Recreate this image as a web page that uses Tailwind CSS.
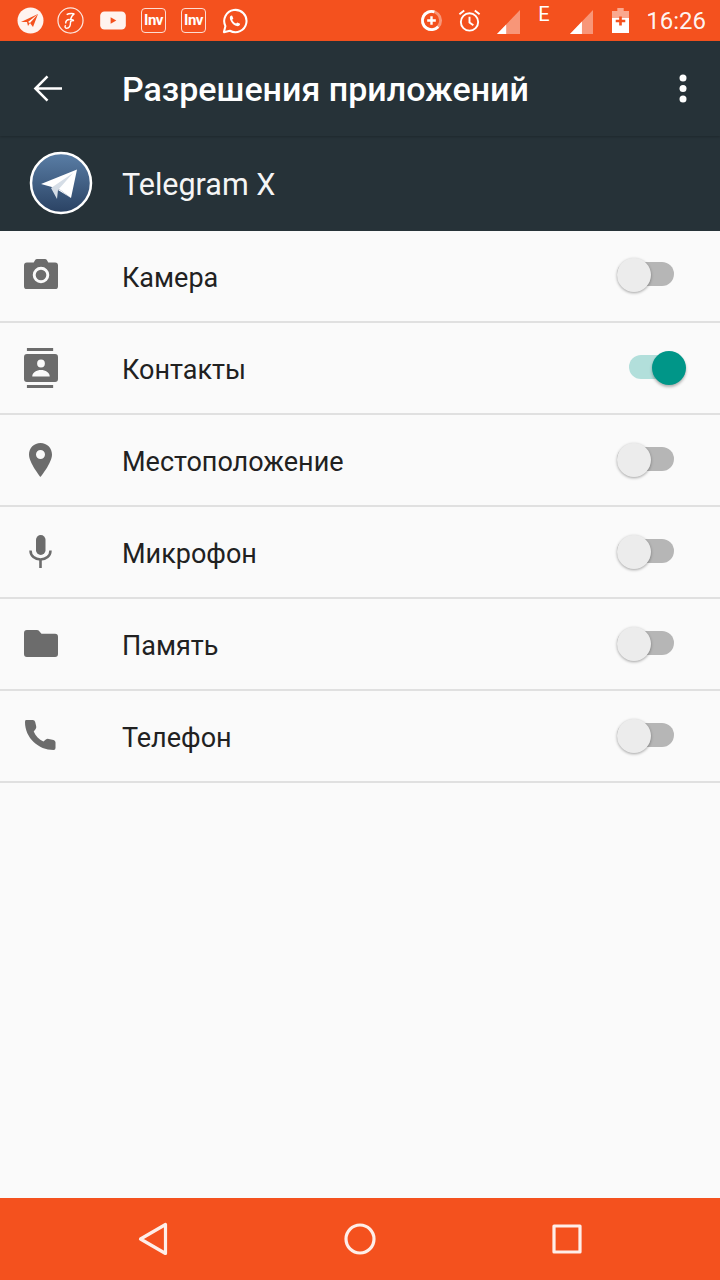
<!DOCTYPE html>
<html lang="ru">
<head>
    <meta charset="UTF-8">
    <meta name="viewport" content="width=device-width, initial-scale=1.0">
    <title>Разрешения приложений</title>
    <script src="https://cdn.jsdelivr.net/npm/@tailwindcss/browser@4"></script>
</head>
<body class="bg-[#fafafa] font-['Roboto',sans-serif]">
<div class="flex flex-col h-[1280px] w-[720px] overflow-hidden">

    <!-- Status bar -->
    <div class="h-[41px] bg-[#f4511e] flex items-center justify-between text-white shrink-0">
        <div class="flex items-center">
            <svg class="ml-[17px] w-[27px] h-[27px]" viewBox="0 0 27 27"><circle cx="13.5" cy="13.5" r="13" fill="#fff" fill-opacity=".93"/><path d="M4 15l17-8-5 13-3-4-2 3-1-4z" fill="#f4511e"/><path d="M13 16l8-9-10 8z" fill="#fff"/></svg>
            <svg class="ml-[13px] w-[27px] h-[27px]" viewBox="0 0 28 28" fill="none" stroke="#fff"><circle cx="14" cy="14" r="13" stroke-width="1.3" stroke-opacity=".85"/><path d="M10 8c3-2 7-1 8-1-2 1-3 3-4 6 2 0 3 0 3 1-2 0-3 1-3 2 0 3-1 6-4 6-2 0-2-2-1-3M9 17c0-3 2-4 4-4" stroke-width="1.5"/></svg>
            <svg class="ml-[16px] w-[26px] h-[19px]" viewBox="0 0 27 20"><rect width="27" height="19" y=".5" rx="4.5" fill="#fff" fill-opacity=".93"/><path d="M11 6.500l6 3.500-6 3.500z" fill="#f4511e"/></svg>
            <div class="ml-[15px] w-[25px] h-[25px] border border-white/80 rounded-[4px] flex items-center justify-center text-[15px] leading-none font-bold tracking-[-0.5px]">Inv</div>
            <div class="ml-[15px] w-[25px] h-[25px] border border-white/80 rounded-[4px] flex items-center justify-center text-[15px] leading-none font-bold tracking-[-0.5px]">Inv</div>
            <svg class="ml-[16px] w-[26px] h-[26px]" viewBox="0 0 28 28" fill="none"><path d="M2 26l1.700-6.500A12 12 0 1 1 8.500 24.500z" stroke="#fff" stroke-width="2.200" stroke-linejoin="round"/><path d="M10 8c-2 1-2 3-.5 6 1.500 3 4 5 6.500 5.500 2 .3 3.500-1 3.500-2.500l-3-1.500-1.300 1.300c-2-.8-3.500-2.500-4.200-4.200l1.200-1.300-1.200-3z" fill="#fff"/></svg>
        </div>
        <div class="flex items-center">
            <svg class="w-[23px] h-[23px]" viewBox="0 0 24 24" fill="none"><circle cx="12" cy="12" r="9.500" stroke="#fff" stroke-opacity=".4" stroke-width="3"/><path d="M19 18.500A9.500 9.500 0 1 1 15 3" stroke="#fff" stroke-width="3"/><path d="M12 7.500v9M7.500 12h9" stroke="#fff" stroke-width="2.500"/></svg>
            <svg class="ml-[14px] w-[25px] h-[25px]" viewBox="0 0 26 26" fill="none" stroke="#fff" stroke-width="2"><circle cx="13" cy="14.500" r="9"/><path d="M13 9v6l4 3M2.500 6.500l5-4M23.500 6.500l-5-4"/></svg>
            <svg class="ml-[15px] mt-[2px] w-[23px] h-[24px]" viewBox="0 0 25 25" preserveAspectRatio="none"><path d="M0 25L25 0v25z" fill="#fff" fill-opacity=".4"/><path d="M0 25l10-10v10z" fill="#fff"/></svg>
            <span class="ml-[18px] w-[14px] text-[20px] leading-none -mt-[14px]">E</span>
            <svg class="ml-[18px] mt-[2px] w-[23px] h-[24px]" viewBox="0 0 25 25" preserveAspectRatio="none"><path d="M0 25L25 0v25z" fill="#fff" fill-opacity=".4"/><path d="M0 25l13-13v13z" fill="#fff"/></svg>
            <svg class="ml-[19px] w-[17px] h-[25px]" viewBox="0 0 16 25" preserveAspectRatio="none"><path d="M5 0h6v3h5v9H0V3h5z" fill="#fff" fill-opacity=".5"/><path d="M0 10h16v15H0z" fill="#fff"/><path d="M8 8.500v9M3.500 13h9" stroke="#f4511e" stroke-width="2.500"/></svg>
            <span class="ml-[17px] mr-[14px] text-[24px] leading-none text-white/95">16:26</span>
        </div>
    </div>

    <!-- Toolbar -->
    <div class="h-[95px] bg-[#263238] flex items-center shrink-0 shadow-[0_1px_2px_rgba(0,0,0,0.2)] relative">
        <svg class="ml-[33px] w-[29px] h-[29px]" viewBox="0 0 30 30" fill="none" stroke="#fff" stroke-width="2.600"><path d="M30 15H3M15 2.500L2.500 15 15 27.500"/></svg>
        <h1 class="ml-[60px] text-[34px] font-medium leading-none text-white whitespace-nowrap">Разрешения приложений</h1>
        <svg class="ml-auto mr-[32px] w-[10px] h-[30px]" viewBox="0 0 10 30" fill="#fff"><circle cx="5" cy="4" r="3.500"/><circle cx="5" cy="14.500" r="3.500"/><circle cx="5" cy="25" r="3.500"/></svg>
    </div>

    <!-- App header -->
    <div class="h-[95px] bg-[#263238] flex items-center shrink-0">
        <svg class="ml-[29px] w-[64px] h-[64px] -mt-[1px]" viewBox="0 0 64 64">
            <defs><linearGradient id="tg" x1="0" y1="0" x2="0" y2="1"><stop offset="0" stop-color="#5a7ea6"/><stop offset="1" stop-color="#2a4263"/></linearGradient></defs>
            <circle cx="32" cy="32" r="30" fill="url(#tg)" stroke="#fff" stroke-width="2.500"/>
            <path d="M12 33L48 18.500 42 47 30 38z" fill="#fff"/>
            <path d="M22 37L44 22 29 39l-1 9z" fill="#d5dde6"/>
            <path d="M29 39l13 8-12-9z" fill="#fff"/>
        </svg>
        <span class="ml-[29px] mt-[3px] text-[30.5px] leading-none text-[#f5f5f5]">Telegram X</span>
    </div>

    <!-- Permissions -->
    <ul class="text-[#212121] text-[27px]">
        <li class="h-[92px] border-b-2 border-[#e0e0e0] flex items-center relative">
            <svg class="ml-[24px] w-[34px] h-[31px] -mt-[3px] shrink-0" viewBox="0 0 35 32" preserveAspectRatio="none"><path fill-rule="evenodd" d="M10 3.500L11.500 1q.5-1 2-1h8q1.500 0 2 1L25 3.500h7q3 0 3 3V28q0 3-3 3H3q-3 0-3-3V6.500q0-3 3-3zM17.500 8a8.500 8.500 0 1 0 0 17 8.500 8.500 0 0 0 0-17zM17.500 11a5.500 5.500 0 1 1 0 11 5.500 5.500 0 0 1 0-11z" fill="#6c6c6c"/></svg>
            <span class="ml-[64px] mt-[4px] leading-none">Камера</span>
            <span class="absolute left-[617px] top-[31px] w-[57px] h-[24px] bg-[#b6b6b6] rounded-full"></span>
            <span class="absolute left-[617px] top-[27px] w-[34px] h-[34px] rounded-full bg-[#ececec] shadow-[0_1px_3px_rgba(0,0,0,0.35)]"></span>
        </li>
        <li class="h-[92px] border-b-2 border-[#e0e0e0] flex items-center relative">
            <svg class="ml-[24px] w-[34px] h-[40px] shrink-0" viewBox="0 0 35 40" preserveAspectRatio="none" fill="#6c6c6c"><path d="M3 0h27v3H3zM3 37h27v3H3z"/><path fill-rule="evenodd" d="M3 6h29q3 0 3 3v22q0 3-3 3H3q-3 0-3-3V9q0-3 3-3zM17.500 11.500a4 4 0 1 0 0 8 4 4 0 0 0 0-8zM8.500 28.500h18c0-4-4.500-6.500-9-6.500s-9 2.500-9 6.500z"/></svg>
            <span class="ml-[64px] mt-[4px] leading-none">Контакты</span>
            <span class="absolute left-[629px] top-[32px] w-[48px] h-[24px] bg-[#b2dfdb] rounded-full"></span>
            <span class="absolute left-[652px] top-[28px] w-[34px] h-[34px] rounded-full bg-[#009688] shadow-[0_2px_3px_rgba(0,0,0,0.3)]"></span>
        </li>
        <li class="h-[92px] border-b-2 border-[#e0e0e0] flex items-center relative">
            <svg class="ml-[29px] w-[23px] h-[34px] -mt-[1px] shrink-0" viewBox="0 0 23 34"><path fill-rule="evenodd" d="M11.500 0C5 0 0 5 0 11.500 0 20 11.500 34 11.500 34S23 20 23 11.500C23 5 18 0 11.500 0zM11.500 7a4.500 4.500 0 1 1 0 9 4.500 4.500 0 0 1 0-9z" fill="#6c6c6c"/></svg>
            <span class="ml-[70px] mt-[4px] leading-none">Местоположение</span>
            <span class="absolute left-[617px] top-[32px] w-[57px] h-[24px] bg-[#b6b6b6] rounded-full"></span>
            <span class="absolute left-[617px] top-[28px] w-[34px] h-[34px] rounded-full bg-[#ececec] shadow-[0_1px_3px_rgba(0,0,0,0.35)]"></span>
        </li>
        <li class="h-[92px] border-b-2 border-[#e0e0e0] flex items-center relative">
            <svg class="ml-[29px] w-[23px] h-[33px] -mt-[2px] shrink-0" viewBox="0 0 23 33" fill="#6c6c6c"><rect x="7" y="0" width="9.500" height="20" rx="4.750"/><path d="M1.500 15.500c0 5.500 4.500 9 10 9s10-3.500 10-9" fill="none" stroke="#6c6c6c" stroke-width="2.500"/><path d="M10.200 24h2.600v9h-2.600z"/></svg>
            <span class="ml-[70px] mt-[4px] leading-none">Микрофон</span>
            <span class="absolute left-[617px] top-[32px] w-[57px] h-[24px] bg-[#b6b6b6] rounded-full"></span>
            <span class="absolute left-[617px] top-[28px] w-[34px] h-[34px] rounded-full bg-[#ececec] shadow-[0_1px_3px_rgba(0,0,0,0.35)]"></span>
        </li>
        <li class="h-[92px] border-b-2 border-[#e0e0e0] flex items-center relative">
            <svg class="ml-[24px] w-[34px] h-[27px] -mt-[1px] shrink-0" viewBox="0 0 35 28" preserveAspectRatio="none"><path d="M3 0h10q2 0 3 1.500L18 4h14q3 0 3 3v18q0 3-3 3H3q-3 0-3-3V3q0-3 3-3z" fill="#6c6c6c"/></svg>
            <span class="ml-[64px] mt-[4px] leading-none">Память</span>
            <span class="absolute left-[617px] top-[32px] w-[57px] h-[24px] bg-[#b6b6b6] rounded-full"></span>
            <span class="absolute left-[617px] top-[28px] w-[34px] h-[34px] rounded-full bg-[#ececec] shadow-[0_1px_3px_rgba(0,0,0,0.35)]"></span>
        </li>
        <li class="h-[92px] border-b-2 border-[#e0e0e0] flex items-center relative">
            <svg class="ml-[25px] w-[31px] h-[30px] -mt-[2px] shrink-0" viewBox="0 0 32 30" preserveAspectRatio="none"><path d="M1 0h7q2 0 2.500 2l1 4q.5 1.500-.5 3L9 11.500c2 4.500 5.500 8 10 10l2.500-2q1.500-1 3-.5l5 1q2 .5 2 2.500v5.500q0 2-2 2C14 30 0 18 0 2q0-2 1-2z" fill="#6c6c6c"/></svg>
            <span class="ml-[66px] mt-[4px] leading-none">Телефон</span>
            <span class="absolute left-[617px] top-[32px] w-[57px] h-[24px] bg-[#b6b6b6] rounded-full"></span>
            <span class="absolute left-[617px] top-[28px] w-[34px] h-[34px] rounded-full bg-[#ececec] shadow-[0_1px_3px_rgba(0,0,0,0.35)]"></span>
        </li>
    </ul>

    <!-- Navigation bar -->
    <div class="mt-auto h-[82px] bg-[#f4511e] relative shrink-0">
        <svg class="absolute left-[138px] top-[24px] w-[30px] h-[34px]" viewBox="0 0 30 34" fill="none" stroke="#fff" stroke-opacity=".9" stroke-width="3.200" stroke-linejoin="round"><path d="M2.500 17L27.500 2.500v29z"/></svg>
        <svg class="absolute left-[344px] top-[24px] w-[32px] h-[34px]" viewBox="0 0 32 34" fill="none" stroke="#fff" stroke-opacity=".9" stroke-width="3.200"><circle cx="16" cy="17" r="14"/></svg>
        <svg class="absolute left-[552px] top-[26px] w-[30px] h-[30px]" viewBox="0 0 30 30" fill="none" stroke="#fff" stroke-opacity=".9" stroke-width="3.200" stroke-linejoin="round"><rect x="2" y="2" width="26" height="26"/></svg>
    </div>
</div>
</body>
</html>
